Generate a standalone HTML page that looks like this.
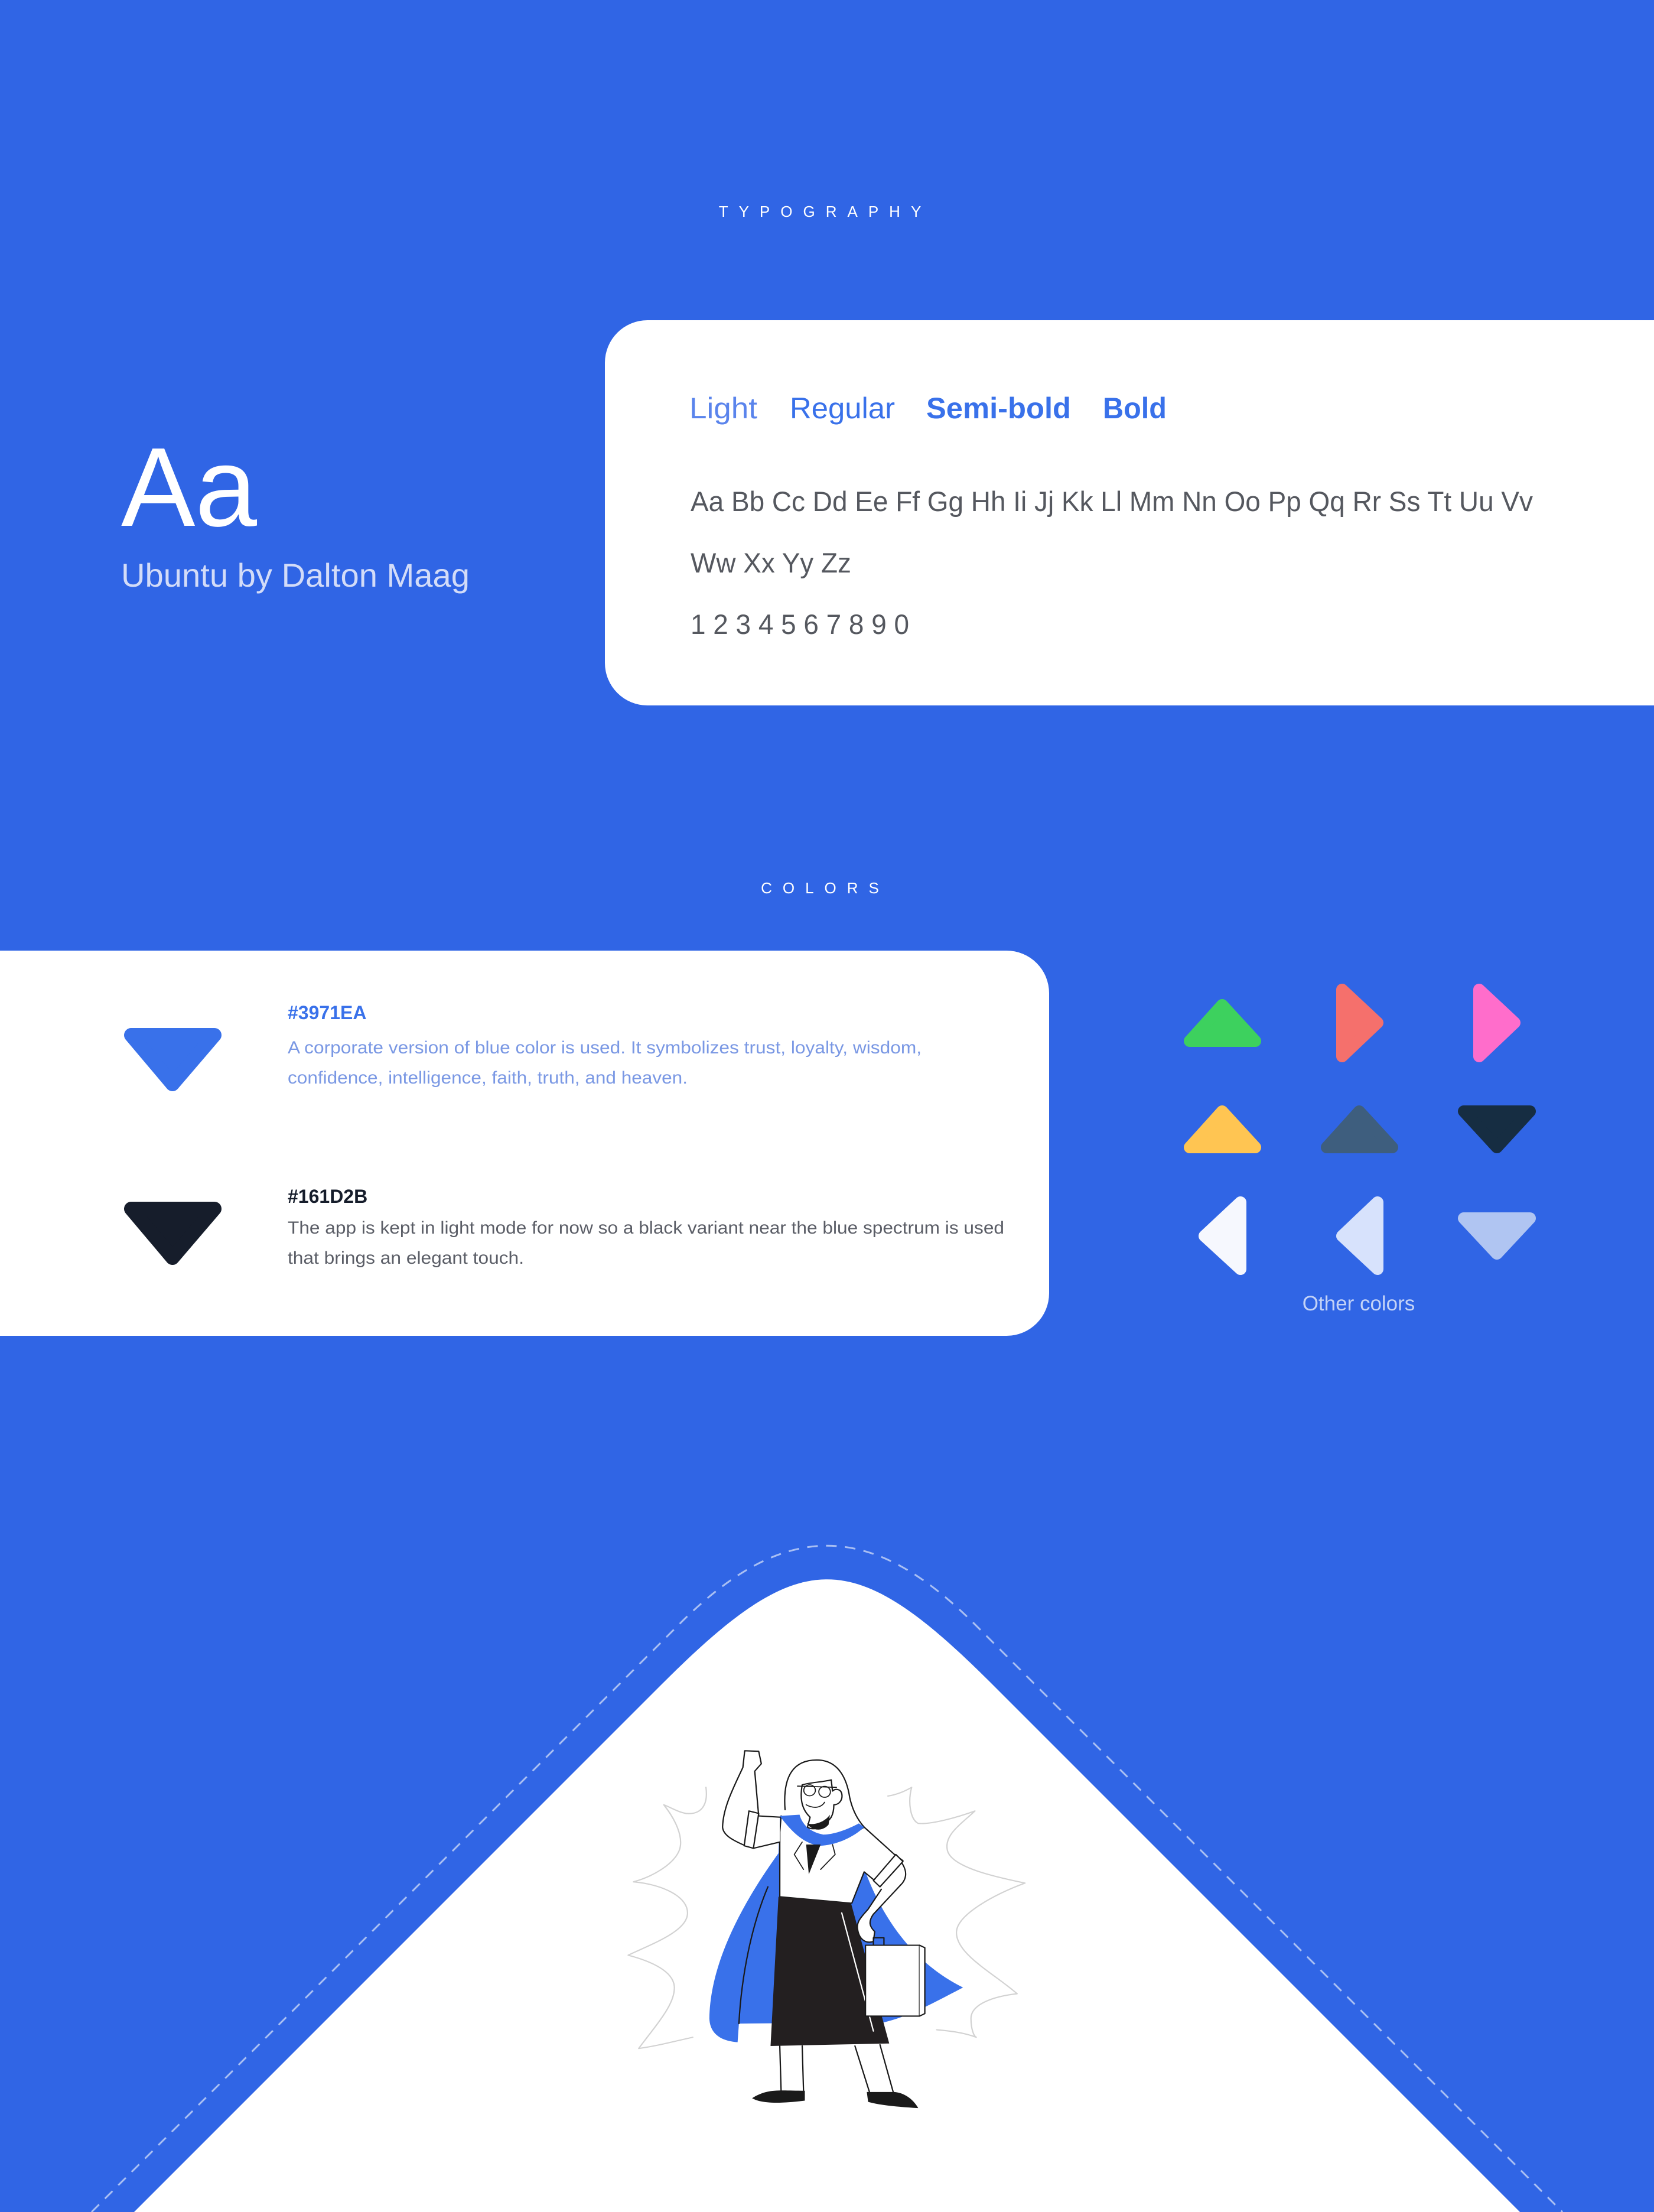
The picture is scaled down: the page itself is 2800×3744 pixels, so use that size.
<!DOCTYPE html>
<html><head><meta charset="utf-8"><style>
html,body{margin:0;padding:0;background:#3065E5;}
svg{display:block;}
text{font-family:"Liberation Sans",sans-serif;}
</style></head><body>
<svg width="2800" height="3744" viewBox="0 0 2800 3744" xmlns="http://www.w3.org/2000/svg">
<rect width="2800" height="3744" fill="#3065E5"/>
<text x="1397" y="367" font-size="26" fill="#fff" text-anchor="middle" letter-spacing="18">TYPOGRAPHY</text>
<text x="205" y="890" font-size="190" fill="#fff" textLength="230" lengthAdjust="spacingAndGlyphs">Aa</text>
<text x="205" y="993" font-size="56" fill="#d3dcf8" textLength="590" lengthAdjust="spacingAndGlyphs">Ubuntu by Dalton Maag</text>
<rect x="1024" y="542" width="1900" height="652" rx="72" fill="#fff"/>
<g font-size="50" fill="#3971EA">
<text x="1167" y="708" textLength="115" lengthAdjust="spacingAndGlyphs" font-weight="300" fill="#5a84ec">Light</text>
<text x="1337" y="708" textLength="178" lengthAdjust="spacingAndGlyphs">Regular</text>
<text x="1568" y="708" textLength="245" lengthAdjust="spacingAndGlyphs" font-weight="bold">Semi-bold</text>
<text x="1867" y="708" textLength="108" lengthAdjust="spacingAndGlyphs" font-weight="bold">Bold</text>
</g>
<g font-size="47" fill="#55585f">
<text x="1169" y="865" textLength="1426" lengthAdjust="spacingAndGlyphs">Aa Bb Cc Dd Ee Ff Gg Hh Ii Jj Kk Ll Mm Nn Oo Pp Qq Rr Ss Tt Uu Vv</text>
<text x="1169" y="969" textLength="272" lengthAdjust="spacingAndGlyphs">Ww Xx Yy Zz</text>
<text x="1169" y="1073" textLength="370" lengthAdjust="spacingAndGlyphs">1 2 3 4 5 6 7 8 9 0</text>
</g>
<text x="1397" y="1512" font-size="26" fill="#fff" text-anchor="middle" letter-spacing="18">COLORS</text>
<rect x="-100" y="1609" width="1876" height="652" rx="72" fill="#fff"/>
<path d="M222,1752 L363,1752 L292,1835 Z" fill="#3971EA" stroke="#3971EA" stroke-width="24" stroke-linejoin="round"/>
<path d="M222,2046 L363,2046 L292,2129 Z" fill="#161D2B" stroke="#161D2B" stroke-width="24" stroke-linejoin="round"/>
<text x="487" y="1725" font-size="32" fill="#3971EA" font-weight="bold">#3971EA</text>
<text x="487" y="1783" font-size="30" fill="#7a98e4" textLength="1073" lengthAdjust="spacingAndGlyphs">A corporate version of blue color is used. It symbolizes trust, loyalty, wisdom,</text>
<text x="487" y="1834" font-size="30" fill="#7a98e4" textLength="677" lengthAdjust="spacingAndGlyphs">confidence, intelligence, faith, truth, and heaven.</text>
<text x="487" y="2036" font-size="32" fill="#161D2B" font-weight="bold">#161D2B</text>
<text x="487" y="2088" font-size="30" fill="#5a5d66" textLength="1213" lengthAdjust="spacingAndGlyphs">The app is kept in light mode for now so a black variant near the blue spectrum is used</text>
<text x="487" y="2139" font-size="30" fill="#5a5d66" textLength="400" lengthAdjust="spacingAndGlyphs">that brings an elegant touch.</text>
<g stroke-linejoin="round" stroke-width="20">
<path d="M2069,1701 L2125,1762 L2014,1762 Z" fill="#3DD15E" stroke="#3DD15E"/>
<path d="M2272,1675 L2332,1731 L2272,1788 Z" fill="#F5706C" stroke="#F5706C"/>
<path d="M2504,1675 L2564,1731 L2504,1788 Z" fill="#FF6DCB" stroke="#FF6DCB"/>
<path d="M2069,1881 L2125,1942 L2014,1942 Z" fill="#FFC552" stroke="#FFC552"/>
<path d="M2301,1881 L2357,1942 L2246,1942 Z" fill="#3E5E7E" stroke="#3E5E7E"/>
<path d="M2478,1881 L2590,1881 L2534,1942 Z" fill="#162D42" stroke="#162D42"/>
<path d="M2100,2035 L2100,2148 L2039,2092 Z" fill="#F6F8FE" stroke="#F6F8FE"/>
<path d="M2332,2035 L2332,2148 L2272,2092 Z" fill="#D7E2FC" stroke="#D7E2FC"/>
<path d="M2478,2062 L2590,2062 L2534,2122 Z" fill="#B0C5F2" stroke="#B0C5F2"/>
</g>
<text x="2300" y="2218" font-size="35" fill="#c4d3f7" text-anchor="middle">Other colors</text>
<path d="M155,3744 L1150,2749 C1327,2572 1473,2572 1650,2749 L2645,3744" fill="none" stroke="#a9bff3" stroke-width="3" stroke-dasharray="18 14"/>
<path d="M227,3744 L1120,2851 C1357,2614 1443,2614 1680,2851 L2573,3744 Z" fill="#fff"/>
<g transform="translate(1050,2920) scale(0.4464,0.4209)" fill="none" stroke-linejoin="round" stroke-linecap="round">
<path d="M325,250 C335,330 300,360 250,355 C220,350 190,330 165,320 C210,380 240,450 225,500 C205,560 120,610 50,630 C160,640 260,690 255,760 C250,830 120,880 30,925 C120,950 200,990 205,1050 C210,1120 140,1200 70,1300 C140,1290 210,1270 275,1255" stroke="#d2d2d2" stroke-width="5"/>
<path d="M1015,285 C1050,280 1080,265 1105,250 C1090,310 1100,380 1130,395 C1180,400 1280,370 1345,345 C1290,400 1230,440 1240,500 C1250,570 1420,610 1535,635 C1420,680 1280,760 1275,830 C1270,920 1420,1000 1505,1080 C1420,1090 1330,1120 1330,1180 C1330,1220 1340,1250 1350,1255 C1300,1235 1250,1230 1200,1225" stroke="#d2d2d2" stroke-width="5"/>
<path d="M605,365 C650,410 700,470 760,480 C830,480 890,440 925,410 L930,590 C990,760 1100,950 1300,1055 C1200,1110 1100,1170 1000,1195 L450,1200 L445,1275 C380,1270 340,1240 338,1180 C340,1000 420,780 600,515 Z" fill="#3971EA"/>
<path d="M560,650 C500,800 460,1000 450,1200" stroke="#1a1a1a" stroke-width="5"/>
<path d="M625,340 C615,200 660,140 745,140 C830,140 860,220 870,290 C880,340 900,380 925,410" stroke="#1a1a1a" stroke-width="5" fill="#fff"/>
<path d="M605,430 L605,690 L878,716 L925,590 L965,625 L1072,545 L1040,520 L925,410 C880,440 820,470 760,480 C700,470 640,410 610,365 L605,430 Z" fill="#fff" stroke="#1a1a1a" stroke-width="5"/>
<path d="M605,365 C650,430 700,480 760,485 C830,480 890,445 925,410 L905,395 C860,420 810,440 770,440 C720,430 690,400 680,360 Z" fill="#3971EA"/>
<path d="M705,480 L760,480 L715,600 Z" fill="#1a1a1a"/>
<path d="M690,470 L660,520 L695,580 M805,480 L815,520 L760,580" stroke="#1a1a1a" stroke-width="4"/>
<path d="M600,690 L875,715 L1020,1280 L570,1290 Z" fill="#231f20"/>
<path d="M840,755 L960,1230" stroke="#fff" stroke-width="5"/>
<path d="M605,370 L525,365 L510,185 L535,155 L525,105 L472,103 L465,170 C430,250 390,330 388,410 C390,440 420,460 475,485 L505,495 L605,470" fill="#fff" stroke="#1a1a1a" stroke-width="5"/>
<path d="M488,345 L525,355 L505,495 L470,485 Z" fill="#fff" stroke="#1a1a1a" stroke-width="5"/>
<path d="M1040,520 C1080,560 1095,600 1070,635 L960,760 C940,790 945,810 965,830 L960,870 C930,880 905,860 900,820 C895,790 915,770 940,740 L990,660" fill="#fff" stroke="#1a1a1a" stroke-width="5"/>
<path d="M960,625 L1045,520 L1072,548 L985,650 Z" fill="#fff" stroke="#1a1a1a" stroke-width="5"/>
<path d="M690,240 C680,300 690,340 720,370 L710,410 C740,430 780,400 800,370 C810,350 810,330 810,320 C830,320 845,300 840,275 C835,255 815,255 805,265 L800,220 C760,230 720,230 690,240 Z" fill="#fff" stroke="#1a1a1a" stroke-width="5"/>
<circle cx="718" cy="262" r="22" stroke="#1a1a1a" stroke-width="4"/>
<circle cx="775" cy="268" r="22" stroke="#1a1a1a" stroke-width="4"/>
<path d="M672,245 L820,250 M705,320 C730,335 760,335 775,310" stroke="#1a1a1a" stroke-width="4"/>
<path d="M708,395 C740,405 780,385 795,360 L790,400 C770,425 730,430 708,395 Z" fill="#1a1a1a"/>
<path d="M960,885 L960,855 L1000,855 L1000,885" stroke="#1a1a1a" stroke-width="5"/>
<rect x="930" y="885" width="205" height="285" fill="#fff" stroke="#1a1a1a" stroke-width="5"/>
<path d="M1135,885 L1155,895 L1155,1160 L1135,1170" fill="#fff" stroke="#1a1a1a" stroke-width="5"/>
<path d="M605,1290 L610,1470 M690,1290 L695,1470 M890,1290 L945,1475 M985,1285 L1035,1475" stroke="#1a1a1a" stroke-width="5"/>
<path d="M500,1500 C560,1460 600,1470 700,1470 L700,1510 C620,1520 540,1525 500,1500Z" fill="#1a1a1a"/>
<path d="M935,1475 L1040,1475 C1090,1480 1120,1520 1130,1540 C1060,1535 990,1530 940,1515 Z" fill="#1a1a1a"/>
</g>
</svg>
</body></html>
